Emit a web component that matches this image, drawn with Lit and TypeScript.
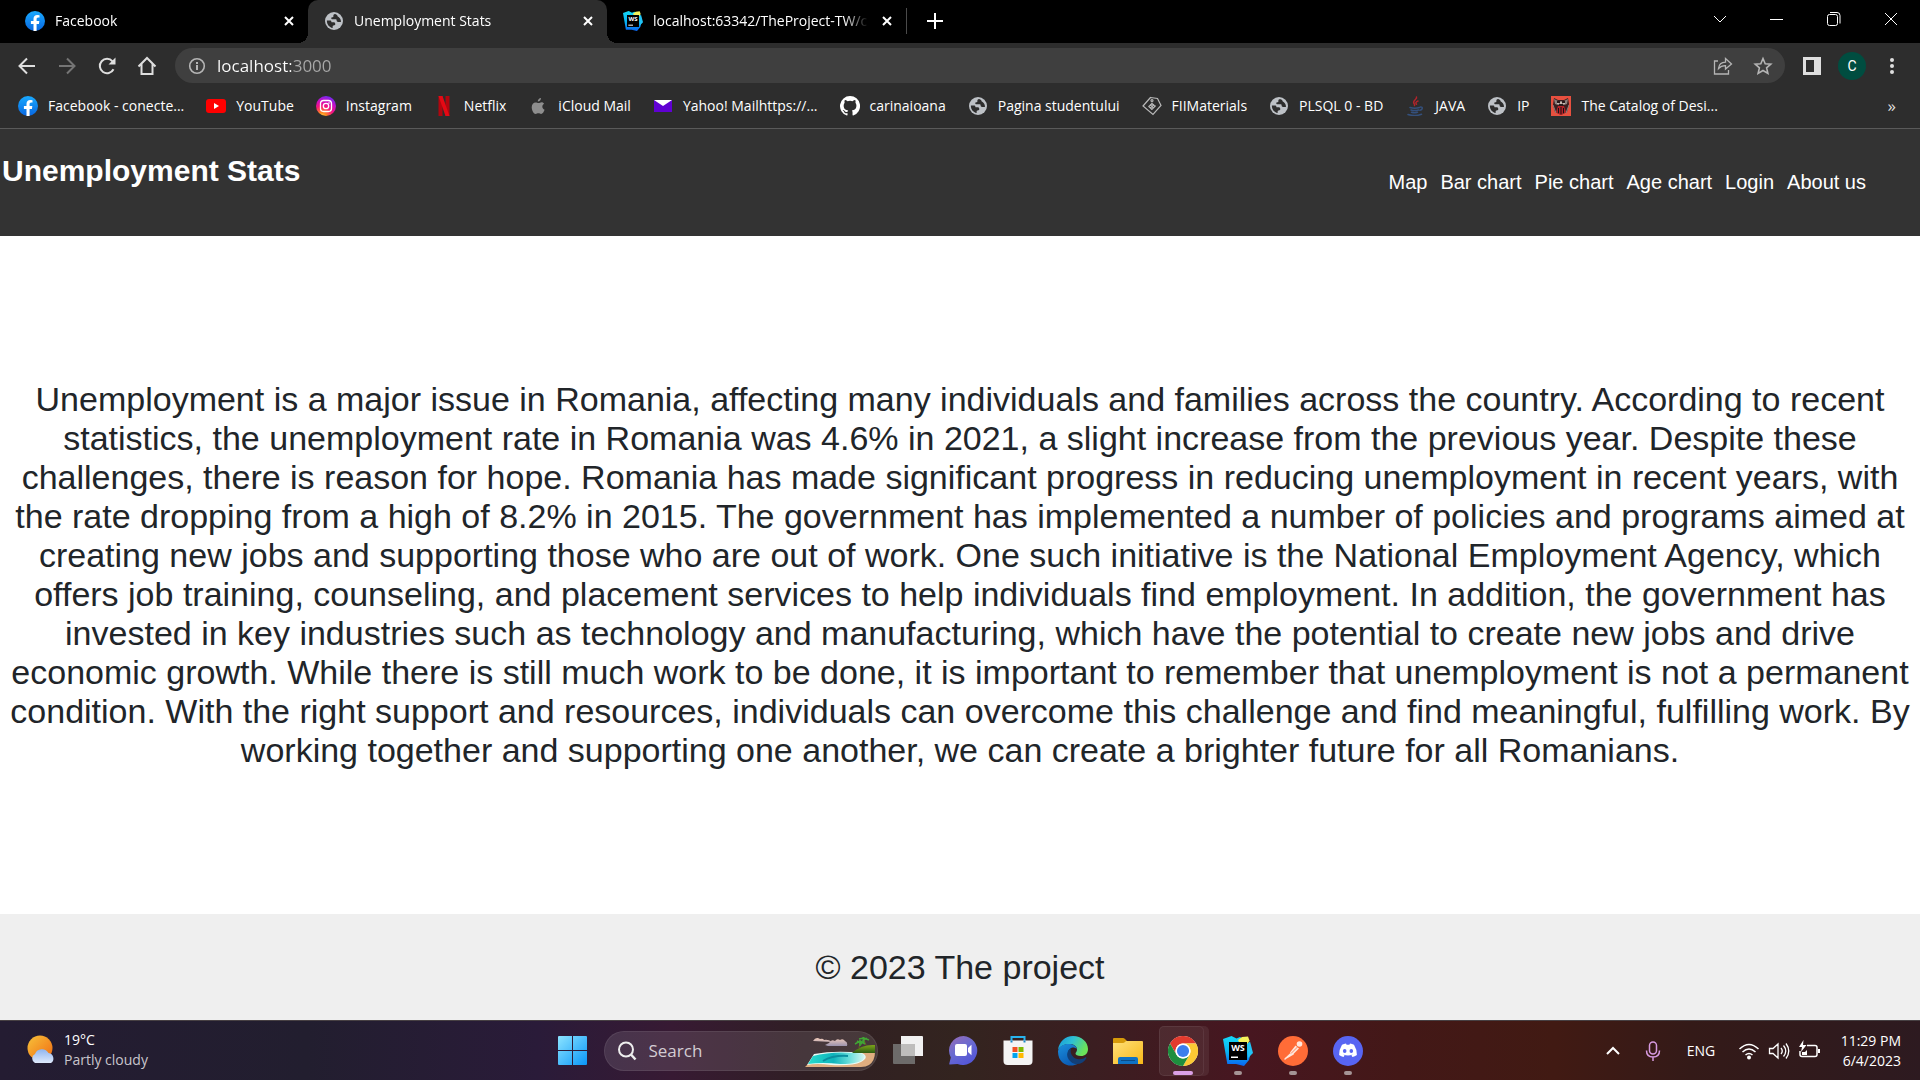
import { LitElement, html, svg, css, nothing, TemplateResult } from "lit";
import { customElement, property } from "lit/decorators.js";

const icon = (name: string, size: number, box: number, body: unknown): TemplateResult => html`
  <svg class="icon ${name}" width=${size} height=${size} viewBox="0 0 ${box} ${box}" aria-hidden="true">${body}</svg>`;

const facebook = () => icon("facebook", 20, 24, svg`
  <defs><linearGradient id="fb" x1="0" y1="0" x2="0" y2="1"><stop offset="0" stop-color="#19aaff"/><stop offset="1" stop-color="#0866e0"/></linearGradient></defs>
  <circle cx="12" cy="12" r="12" fill="url(#fb)"/>
  <path fill="#fff" d="M16.7 15.5l.5-3.5h-3.3V9.8c0-1 .5-1.9 2-1.9h1.5V5a18 18 0 0 0-2.7-.3c-2.700 0-4.500 1.700-4.500 4.700V12H7.100v3.500h3.100v8.400a12 12 0 0 0 3.700 0v-8.400z"/>`);

const globe = () => icon("globe", 18, 24, svg`
  <circle cx="12" cy="12" r="12" fill="#bdc1c6"/>
  <path fill="#2d2d2d" d="M13.500 2.600c-2 .4-2.500 1.600-2.300 2.600.2 1-.5 1.600-1.800 1.700-1 .1-1.200.9-1 1.700.3 1 1.100 1.200 2.600 1.200h3.200c.8 0 1.300.6 1.300 1.500 0 1.200.7 1.900 1.900 1.900h3.900c.2-3.600-2-6.400-4.600-7.700 0-1.300-.9-2.300-3.200-2.900z"/>
  <path fill="#2d2d2d" d="M2.500 11.300c-.2 5 3 9 7.700 10.100v-2c0-1 .5-1.500 1.500-1.500 1.300 0 2-.6 2-1.900 0-1.500-.8-2.300-2.300-2.300h-1.700c-.9 0-1.300-.4-1.300-1.200s-.5-1.200-1.300-1.200z"/>`);

const webstorm = (size: number) => icon("webstorm", size, 30, svg`
  <defs><linearGradient id="ws" x1="0" y1="0" x2="0" y2="1"><stop offset="0" stop-color="#15d8f7"/><stop offset=".55" stop-color="#08b2f2"/><stop offset="1" stop-color="#0a64f2"/></linearGradient></defs>
  <path fill="url(#ws)" d="M4.300 28L0 3l8.500-3 5 2.500L17 1l8 5 3 10-2 8-5 6-8-2z"/>
  <path fill="#f4f25b" d="M15 4L19 1 25 .5l1.500 4L24 9l-7-1z"/>
  <path fill="#21c4f5" d="M24 8l3-2.500L30 17l-5 5z"/>
  <path fill="#000" d="M6 6h18v18H6z"/>
  <text x="15" y="15" text-anchor="middle" class="ws-label">WS</text>
  <path fill="#fff" d="M8 20.500h7V22H8z"/>`);

const bookmarkIcons: Record<string, () => TemplateResult> = {
  facebook,
  globe,
  youtube: () => icon("youtube", 20, 20, svg`<rect y="3" width="20" height="14" rx="3" fill="#f00"/><path fill="#fff" d="M8 7v6l5-3z"/>`),
  instagram: () => icon("instagram", 20, 20, svg`
    <defs><radialGradient id="ig" cx=".3" cy="1.050" r="1.100"><stop offset="0" stop-color="#fd5"/><stop offset=".2" stop-color="#ff8a1f"/><stop offset=".5" stop-color="#f5137f"/><stop offset=".75" stop-color="#c80fc4"/><stop offset="1" stop-color="#6a2df5"/></radialGradient></defs>
    <circle cx="10" cy="10" r="10" fill="url(#ig)"/>
    <rect x="4.500" y="4.500" width="11" height="11" rx="3.200" fill="none" stroke="#fff" stroke-width="1.300"/>
    <circle cx="10" cy="10" r="2.700" fill="none" stroke="#fff" stroke-width="1.300"/><circle cx="13" cy="7" r=".8" fill="#fff"/>`),
  netflix: () => icon("netflix", 20, 20, svg`<path fill="#b1060f" d="M4.500 0h4v20h-4zM11.500 0h4v20h-4z"/><path fill="#e50914" d="M4.500 0h4l7 20h-4z"/>`),
  apple: () => icon("apple", 20, 20, svg`<path fill="#8e8e8e" d="M13 2c.1 1.800-1.300 3.500-3.200 3.500C9.600 3.800 11.200 2.100 13 2zM16 7.800c-2.500 1.600-2 4.900.6 6-.8 2.200-2 4.200-3.500 4.200-1.100 0-1.400-.7-2.700-.7s-1.700.7-2.700.7c-2 0-4-4-4-6.800 0-3 1.900-4.800 3.900-4.800 1.200 0 2 .7 3 .7.900 0 1.700-.8 3.100-.8.900 0 1.800.5 2.300 1.500z"/>`),
  yahoo: () => icon("yahoo", 20, 20, svg`<path fill="#6001d2" d="M1 4h18v12H1z"/><path fill="#fff" d="M1 4h18l-9 6z"/>`),
  github: () => icon("github", 20, 16, svg`<path fill="#fff" d="M8 0a8 8 0 0 0-2.530 15.590c.4.070.55-.17.55-.38v-1.490c-2.010.37-2.530-.49-2.690-.94-.09-.23-.48-.94-.82-1.130-.28-.15-.68-.52-.01-.53.630-.01 1.080.58 1.230.82.720 1.210 1.870.87 2.330.66.070-.52.280-.87.510-1.070-1.780-.2-3.640-.89-3.640-3.950 0-.87.310-1.590.82-2.150-.08-.2-.36-1.020.08-2.120 0 0 .67-.21 2.200.82a7.500 7.500 0 0 1 4 0c1.530-1.040 2.200-.82 2.200-.82.440 1.100.16 1.920.08 2.120.51.560.82 1.270.82 2.150 0 3.070-1.870 3.750-3.650 3.950.29.250.54.730.54 1.480v2.200c0 .21.150.46.550.38A8 8 0 0 0 8 0z"/>`),
  tag: () => icon("tag", 20, 20, svg`<g fill="none" stroke="#b9b9b9" stroke-width="1.200"><path d="M8.500 1.500l7 1 3.500 7-8 9-10-8.500z"/><circle cx="10" cy="4.500" r="1"/><path d="M6.500 10l3.500 3.500M8 8.500l3.500 3.500M9.500 7l3.500 3.500M6.500 11l4-4M8 12.300l4-4M9.700 13.700l4-4"/></g>`),
  java: () => icon("java", 20, 20, svg`
    <g fill="none" stroke-linecap="round"><path stroke="#b0242b" stroke-width="1.500" d="M11.500 1c1 2.500-4.500 3.500-2.500 6.500.4.700.8 1.200.5 2M13 5c-2.500 1-2.500 2-1.500 3.300"/>
    <path stroke="#34507c" stroke-width="1.500" d="M5 11.500c3 .9 6.500.9 9.500 0M6 14c2.500.8 5 .8 7.500 0M6.500 16.300c2 .7 4 .7 6 0M15.500 11c2.500-.3 2.300 2.700-.5 3.300M3 18.500c4 1.200 10 1.200 13.500-.2"/></g>`),
  catalog: () => icon("catalog", 20, 20, svg`<path fill="#e8503f" d="M0 0h20v20H0z"/><path fill="#3a1e20" d="M3 2l4 2h6l4-2 1 6-2 8-6 3-6-3-2-7z"/><path fill="#8b807c" d="M3 3l4 2h6l4-2-1 5-3 1H7L4 8z"/><path fill="#2a1a1c" d="M6 5h3v2H6zM11 5h3v2h-3zM8 8h4v2H8z"/><path fill="#c7b9b2" d="M6 7h2v1H6zM12 7h2v1h-2zM9 6h2v2H9z"/><path fill="#b52228" d="M7 10h6l2 6-5 3-5-3z"/><path stroke="#161014" stroke-width="1" d="M10 11v7M7.500 12v5M12.500 12v5"/><path stroke="#8f7f7a" stroke-width="1" d="M2 9l3 8M18 9l-3 8"/>`),
};

const BOOKMARKS: [string, string][] = [
  ["facebook", "Facebook - conecte..."],
  ["youtube", "YouTube"],
  ["instagram", "Instagram"],
  ["netflix", "Netflix"],
  ["apple", "iCloud Mail"],
  ["yahoo", "Yahoo! Mailhttps://..."],
  ["github", "carinaioana"],
  ["globe", "Pagina studentului"],
  ["tag", "FIIMaterials"],
  ["globe", "PLSQL 0 - BD"],
  ["java", "JAVA"],
  ["globe", "IP"],
  ["catalog", "The Catalog of Desi..."],
];

const line = (name: string, size: number, d: string, width = 2) =>
  icon(name, size, size, svg`<path fill="none" stroke="currentColor" stroke-width=${width} d=${d}/>`);

@customElement("browser-tab")
export class BrowserTab extends LitElement {
  @property() label = "";
  @property({ type: Boolean, reflect: true }) active = false;
  @property({ attribute: false }) favicon: TemplateResult | typeof nothing = nothing;

  static styles = css`
    :host { position: relative; display: flex; align-items: center; gap: 10px; width: 299px; height: 43px; padding: 0 10px 2px 16px; box-sizing: border-box; color: #fff; }
    :host([active]) { background: #2d2d2d; border-radius: 10px 10px 0 0; }
    :host([active])::before, :host([active])::after { content: ""; position: absolute; bottom: 0; width: 10px; height: 10px; }
    :host([active])::before { left: -10px; background: radial-gradient(circle at 0 0, transparent 10px, #2d2d2d 10px); }
    :host([active])::after { right: -10px; background: radial-gradient(circle at 100% 0, transparent 10px, #2d2d2d 10px); }
    .favicon { display: grid; place-items: center; width: 20px; }
    .icon { display: block; flex: none; }
    .ws-label { font: 700 9px "Open Sans", sans-serif; fill: #fff; }
    .label { flex: 1; min-width: 0; white-space: nowrap; mask-image: linear-gradient(90deg, #000 calc(100% - 24px), transparent); }
    button { display: grid; place-items: center; width: 18px; height: 18px; padding: 0; border: 0; background: none; color: inherit; }
  `;

  render() {
    return html`<span class="favicon">${this.favicon}</span><span class="label">${this.label}</span>
      <button aria-label="Close tab">${line("close", 12, "M2 2l8 8M10 2l-8 8")}</button>`;
  }
}

@customElement("browser-chrome")
export class BrowserChrome extends LitElement {
  static styles = css`
    :host { display: block; background: #2d2d2d; border-bottom: 1px solid #5a5a5a; color: #fff; font: 14px/20px "Open Sans", sans-serif; }
    button { display: grid; place-items: center; padding: 0; border: 0; background: none; color: #dedede; font: inherit; }
    .icon { display: block; flex: none; }
    .strip { display: flex; align-items: center; height: 43px; padding-left: 9px; background: #000; }
    .new-tab { width: 56px; height: 26px; margin-bottom: 2px; border-left: 1px solid #4a4a4a; color: #fff; }
    .window { display: flex; margin-left: auto; padding-right: 1px; }
    .window button { width: 57px; height: 38px; margin-bottom: 5px; color: #fff; }
    .toolbar { display: flex; align-items: center; height: 45px; padding: 0 8px 0 7px; }
    .toolbar button { width: 40px; height: 36px; }
    .toolbar .faded { color: #757575; }
    .omnibox { display: flex; align-items: center; flex: 1; height: 35px; margin: 0 7px 0 8px; padding: 0 2px 0 13px; border-radius: 18px; background: #3f3f3f; color: #b5b5b5; gap: 11px; }
    .omnibox input { flex: 1; min-width: 0; height: 28px; padding: 0; border: 0; outline: 0; font: 17px/24px "Open Sans", sans-serif; color: transparent; background: linear-gradient(90deg, #fff 74px, #a8a8a8 74px) text; }
    .actions { display: flex; }
    .omnibox button { color: #b5b5b5; }
    .toolbar .avatar { width: 28px; height: 28px; margin: 0 6px; border-radius: 50%; background: #004d40; color: #fff; font-family: Roboto, sans-serif; }
    .bookmarks { display: flex; align-items: center; height: 36px; padding: 0 24px 4px 18px; gap: 22px; white-space: nowrap; }
    .bookmarks a { display: flex; align-items: center; gap: 10px; color: #fff; text-decoration: none; }
    .bookmarks .mark { display: grid; place-items: center; width: 20px; }
    .bookmarks .more { margin-left: auto; font-size: 17px; }
  `;

  render() {
    return html`
      <div class="strip">
        <browser-tab label="Facebook" .favicon=${facebook()}></browser-tab>
        <browser-tab label="Unemployment Stats" active .favicon=${globe()}></browser-tab>
        <browser-tab label="localhost:63342/TheProject-TW/c" .favicon=${webstorm(20)}></browser-tab>
        <button class="new-tab" aria-label="New tab">${line("plus", 16, "M8 0v16M0 8h16")}</button>
        <div class="window">
          <button aria-label="Search tabs">${line("down", 14, "M1 4l6 6 6-6", 1)}</button>
          <button aria-label="Minimize">${line("minimize", 14, "M0 7.5h13", 1)}</button>
          <button aria-label="Restore">${line("restore", 14, "M2.500 2.500h6q2 0 2 2v7q0 2-2 2h-6q-2 0-2-2v-7q0-2 2-2zM3 .5h7q3 0 3 3v8", 1)}</button>
          <button aria-label="Close">${line("close", 14, "M1 1l12 12M13 1L1 13", 1)}</button>
        </div>
      </div>
      <div class="toolbar">
        <button aria-label="Back">${line("back", 18, "M17 9H2M9 1.500L1.500 9 9 16.500")}</button>
        <button class="faded" aria-label="Forward">${line("forward", 18, "M1 9h15M9 1.500L16.500 9 9 16.500")}</button>
        <button aria-label="Reload">${icon("reload", 20, 20, svg`<path fill="none" stroke="currentColor" stroke-width="2" d="M16.500 13.200A7.200 7.200 0 1 1 15.500 5.300"/><path fill="currentColor" d="M18.500 1.500v7h-7z"/>`)}</button>
        <button aria-label="Home">${line("home", 20, "M1.500 10.500L10 2l8.500 8.500M4.500 8v10h11V8")}</button>
        <div class="omnibox">
          ${icon("info", 18, 18, svg`<circle cx="9" cy="9" r="7.300" fill="none" stroke="currentColor" stroke-width="1.600"/><path fill="currentColor" d="M8 8h2v5H8zM8 5h2v2H8z"/>`)}
          <input aria-label="Address" .value=${"localhost:3000"}>
          <div class="actions">
            <button aria-label="Share">${line("share", 20, "M5 5H1.500v13h14v-4M5.500 12.500C6 8 9 6.300 12.500 6.200V2.500L18.500 8l-6 5V9.600C9.500 9.500 7.500 10.300 5.500 12.500z", 1.3)}</button>
            <button aria-label="Bookmark">${line("star", 20, "M10 2.500l2.200 5.200 5.600.5-4.200 3.700 1.300 5.500L10 14.500l-4.900 2.900 1.300-5.500L2.200 8.200l5.600-.5z", 1.6)}</button>
          </div>
        </div>
        <button aria-label="Side panel">${icon("panel", 18, 18, svg`<path fill="currentColor" fill-rule="evenodd" d="M0 0h18v18H0zM3 3v12h8V3z"/>`)}</button>
        <button class="avatar" aria-label="Profile">C</button>
        <button aria-label="Menu">${icon("dots", 18, 18, svg`<g fill="currentColor"><circle cx="9" cy="3" r="2"/><circle cx="9" cy="9" r="2"/><circle cx="9" cy="15" r="2"/></g>`)}</button>
      </div>
      <nav class="bookmarks" aria-label="Bookmarks">
        ${BOOKMARKS.map(([name, label]) => html`<a href="#"><span class="mark">${bookmarkIcons[name]()}</span><span>${label}</span></a>`)}
        <button class="more" aria-label="More bookmarks">»</button>
      </nav>`;
  }
}

const LINKS = ["Map", "Bar chart", "Pie chart", "Age chart", "Login", "About us"];

@customElement("stats-page")
export class StatsPage extends LitElement {
  static styles = css`
    :host { display: flex; flex-direction: column; flex: 1; background: #fff; color: #212529; font: 34px/39px "Liberation Sans", Arial, sans-serif; }
    header { display: flex; justify-content: space-between; min-height: 57px; padding: 25px 54px 25px 2px; background: #333; color: #fff; }
    h1 { margin: 0; font-size: 30px; line-height: 34px; }
    nav { display: flex; align-items: center; gap: 13px; font-size: 20px; line-height: 23px; }
    a { color: #fff; text-decoration: none; }
    main { display: flex; flex: 1; align-items: center; justify-content: center; padding: 0 10px; text-align: center; }
    p { margin: 0; }
    footer { padding: 34px 0 33px; background: #efefef; text-align: center; }
  `;

  render() {
    return html`
      <header>
        <h1>Unemployment Stats</h1>
        <nav>${LINKS.map((label) => html`<a href="#">${label}</a>`)}</nav>
      </header>
      <main>
        <p>Unemployment is a major issue in Romania, affecting many individuals and families across the country. According to recent statistics, the unemployment rate in Romania was 4.6% in 2021, a slight increase from the previous year. Despite these challenges, there is reason for hope. Romania has made significant progress in reducing unemployment in recent years, with the rate dropping from a high of 8.2% in 2015. The government has implemented a number of policies and programs aimed at creating new jobs and supporting those who are out of work. One such initiative is the National Employment Agency, which offers job training, counseling, and placement services to help individuals find employment. In addition, the government has invested in key industries such as technology and manufacturing, which have the potential to create new jobs and drive economic growth. While there is still much work to be done, it is important to remember that unemployment is not a permanent condition. With the right support and resources, individuals can overcome this challenge and find meaningful, fulfilling work. By working together and supporting one another, we can create a brighter future for all Romanians.</p>
      </main>
      <footer>© 2023 The project</footer>`;
  }
}

const start = icon("start", 29, 29, svg`
  <defs><linearGradient id="win" x1="0" y1="0" x2="1" y2="1"><stop offset="0" stop-color="#8ce4ff"/><stop offset="1" stop-color="#0a96f8"/></linearGradient></defs>
  <path fill="url(#win)" d="M0 1q0-1 1-1h13v14H0zM15 0h13q1 0 1 1v13H15zM0 15h14v14H1q-1 0-1-1zM15 15h14v13q0 1-1 1H15z"/>`);

const island = html`<svg class="island" width="70" height="30" viewBox="0 0 70 30" aria-hidden="true">
  <defs>
    <linearGradient id="sea" x1="0" y1="0" x2="1" y2="0"><stop offset="0" stop-color="#27dccd"/><stop offset=".45" stop-color="#0fb4bc"/><stop offset=".75" stop-color="#6fe0dd"/><stop offset="1" stop-color="#d9f7f0"/></linearGradient>
    <linearGradient id="cloud" x1="0" y1="0" x2="0" y2="1"><stop offset="0" stop-color="#f3cdbb"/><stop offset="1" stop-color="#9b93ae"/></linearGradient>
    <linearGradient id="hill" x1="0" y1="0" x2="0" y2="1"><stop offset="0" stop-color="#7ea61a"/><stop offset="1" stop-color="#2d5c12"/></linearGradient>
  </defs>
  <path fill="url(#cloud)" d="M8 4q3-5 7-2 3-1 4 1 4-1 8 2zM20 8l4-2q2-4 6-2 2-3 5-1 3-2 5 1 3 1 2 5H23z"/>
  <path fill="#e0ae80" d="M0 30l5-5q30-10 50-9l15-1q0 9-6 13-3 2-8 2z"/>
  <path fill="#e9fbf6" d="M2 28L9 17q22-4 48-1 8 4-1 9-8 4-30 3-14-2-24 0z"/>
  <path fill="url(#sea)" d="M3 27L8 19q18-5 42-3 12 0 9 5-3 6-24 6-18-2-32 0z"/>
  <path fill="none" stroke="#0a8fa0" stroke-width="2" d="M18 24q10-6 25-5"/>
  <path fill="url(#hill)" d="M47 16Q57 7 70 8v8z"/>
  <path fill="none" stroke="#715c26" stroke-width="1" d="M54 11l1-6M61 8l-2-5"/>
  <path fill="none" stroke="#40a534" stroke-width="1.500" d="M50 7l5-3 5 3M52 4l5 3M55 3v6M54 2l5-1 5 2M58 0l1 6M56 5l6-4"/>
</svg>`;

const apps: [string, TemplateResult, string][] = [
  ["Task View", icon("taskview", 30, 30, svg`<path fill="#6d6b6a" d="M0 8h22v20H1q-1 0-1-1z"/><path fill="#f1f1f1" d="M8 0h21q1 0 1 1v19H8z"/><path fill="#bebdbc" d="M8 8h14v12H8z"/>`), ""],
  ["Chat", icon("chat", 29, 29, svg`<defs><linearGradient id="chat" x1="0" y1="0" x2=".6" y2="1"><stop offset="0" stop-color="#9a6bb5"/><stop offset=".5" stop-color="#6b6bd0"/><stop offset="1" stop-color="#5457d8"/></linearGradient></defs><path fill="url(#chat)" d="M14.500 0a14.500 14.500 0 1 1-6 28L1 28.500q-1 0-.7-1l1.500-6A14.500 14.500 0 0 1 14.500 0z"/><rect x="6" y="8" width="12" height="12" rx="2" fill="#fff"/><path fill="#fff" d="M19 12l3.500-3.300v10.600L19 16z"/>`), ""],
  ["Store", icon("store", 30, 30, svg`<path fill="none" stroke="#28b4ee" stroke-width="2" d="M8.500 6V1h13v5"/><path fill="#f4f4f4" d="M.5 4.500h29V25q0 4-4 4h-21q-4 0-4-4z"/><path fill="none" stroke="#1c86c4" stroke-width="2" d="M8.500 4.500v2M21.500 4.500v2"/><path fill="#f25022" d="M9.500 11h5v5h-5z"/><path fill="#7fba00" d="M15.500 11h5v5h-5z"/><path fill="#00a4ef" d="M9.500 17h5v5h-5z"/><path fill="#ffb900" d="M15.500 17h5v5h-5z"/>`), ""],
  ["Edge", icon("edge", 30, 30, svg`
    <defs><linearGradient id="e1" x1="0" y1="0" x2="1" y2=".4"><stop offset="0" stop-color="#1597dd"/><stop offset=".5" stop-color="#2fc0d2"/><stop offset="1" stop-color="#6be35a"/></linearGradient><linearGradient id="e2" x1="0" y1="0" x2=".5" y2="1"><stop offset="0" stop-color="#1b8fdc"/><stop offset="1" stop-color="#0b5cb5"/></linearGradient></defs>
    <path fill="url(#e1)" d="M0 14C1 6 7 0 15 0c8.500 0 15 6 15 13 0 4.500-3 7-7 7-3.500 0-5.500-1.200-5.500-2.500 0-1 1.500-1.500 1.500-4C19 10 15.500 8 11 8 6 8 2 10.500 0 14z"/>
    <path fill="url(#e2)" d="M0 15C1 10.500 5.500 8 10.500 8c4.500 0 8 2 8.300 5-1-1-2.300-1.500-4-1.500-5 1-7 8-2 13.500 1.700 1.800 4 2.800 7 2.800-7.500 4.500-20 .7-19.800-12.800z"/>
    <path fill="#123f77" d="M13.500 11.700c-2.500 4 .5 10.300 6 11.300 3.500.7 6-.4 7.500-1.500 1-.6 1.800.2 1.200 1-2.500 4-6.500 6-10.200 5.500-6.500-1-10-7-8.500-11.500.7-2.500 2.200-4.200 4-4.800z"/>`), ""],
  ["File Explorer", icon("explorer", 30, 30, svg`<defs><linearGradient id="fold" x1="0" y1="0" x2="1" y2="1"><stop offset="0" stop-color="#ffe07a"/><stop offset="1" stop-color="#f8b818"/></linearGradient></defs><path fill="#d79a0a" d="M0 3q0-1 1-1h9q1 0 2 1l2 2h10v5H0z"/><path fill="url(#fold)" d="M0 7h10q1 0 2-1l1-1h16q1 0 1 1v22H0z"/><path fill="#0f72c4" d="M5 28v-5q0-2 2-2h16q2 0 2 2v5z"/><path stroke="#0a4c88" stroke-width="1" d="M8 24.500h14"/>`), ""],
  ["Chrome", icon("chrome", 30, 48, svg`
    <circle cx="24" cy="24" r="24" fill="#fff"/>
    <path fill="#e33b2e" d="M3.200 12A24 24 0 0 1 44.800 12H24a12 12 0 0 0-10.400 18z"/>
    <path fill="#fcc934" d="M44.800 12A24 24 0 0 1 24 48l10.400-18A12 12 0 0 0 24 12z"/>
    <path fill="#1e8e3e" d="M24 48A24 24 0 0 1 3.200 12l10.400 18a12 12 0 0 0 20.800 0z"/>
    <circle cx="24" cy="24" r="12" fill="#fff"/><circle cx="24" cy="24" r="9.700" fill="#3b7ded"/>`), "current"],
  ["WebStorm", webstorm(30), "running"],
  ["Postman", icon("postman", 30, 30, svg`<circle cx="15" cy="15" r="15" fill="#ff6c37"/><circle cx="21.500" cy="8" r="2.800" fill="#ffe7dc"/><path fill="#ffe7dc" d="M17.500 9.500l3.500 3-6.500 6.500-2.500-2.500z"/><path stroke="#ffe7dc" stroke-width="1.500" fill="none" stroke-linecap="round" d="M7 23l7-6.500M8 22l7-4"/><path stroke="#ff6c37" stroke-width=".8" d="M13 17.500l6.500-6.500"/>`), "running"],
  ["Discord", icon("discord", 30, 30, svg`<circle cx="15" cy="15" r="15" fill="#5865f2"/><path fill="#fff" d="M9 8.700q2-1 4-1.200l.6 1.200h2.800l.6-1.200q2 .2 4 1.200 3 4.800 2.900 10.300-2.200 1.600-4.400 2.100l-1.100-1.700 1.300-.8q-4.700 1.900-9.400 0l1.300.8-1.100 1.700Q8.300 20.600 6.100 19 6 13.500 9 8.700z"/><ellipse cx="11.700" cy="15" rx="1.800" ry="2" fill="#5865f2"/><ellipse cx="18.300" cy="15" rx="1.800" ry="2" fill="#5865f2"/>`), "running"],
];

@customElement("task-bar")
export class TaskBar extends LitElement {
  static styles = css`
    :host { display: grid; grid-template-columns: 1fr auto 1fr; align-items: center; height: 59px; border-top: 1px solid #474043; color: #fff; font: 14px/20px "Open Sans", sans-serif;
      background: linear-gradient(90deg, #241c32 0%, #221e2f 16%, #2a1b39 28%, #371a33 35%, #301f24 42%, #33241f 50%, #3b1e21 57%, #471620 65%, #431817 73%, #411a13 81%, #341a18 88%, #2d1a20 100%); }
    button { display: grid; place-items: center; padding: 0; border: 0; background: none; color: inherit; font: inherit; }
    .icon { display: block; flex: none; }
    .ws-label { font: 700 9px "Open Sans", sans-serif; fill: #fff; }
    .weather { display: flex; gap: 8px; padding: 0 0 2px 27px; justify-self: start; text-align: left; align-items: center; }
    .weather span { display: block; }
    .weather .sky { color: #c9c5cc; }
    .center, .tray { display: flex; align-items: center; }
    .app { position: relative; width: 55px; height: 50px; }
    .app.current::before { content: ""; position: absolute; inset: 0 7px 0 3px; border: 1px solid #ffffff12; border-radius: 5px; background: #ffffff12; box-shadow: 5px 0 0 #ffffff12; }
    .app .icon { position: relative; }
    .app.current::after, .app.running::after { content: ""; position: absolute; bottom: 1px; left: 50%; width: 8px; height: 4px; margin-left: -4px; border-radius: 2px; background: #a59495; }
    .app.current::after { width: 20px; margin-left: -10px; background: #dba0e6; }
    .search { display: flex; align-items: center; gap: 12px; width: 274px; height: 40px; box-sizing: border-box; margin: 0 3px 0 4px; padding-left: 12px; border: 1px solid #ffffff14; border-radius: 20px; background: #ffffff1c; }
    .search input { flex: 1; min-width: 0; padding: 0; border: 0; outline: 0; background: none; color: #fff; font: 17px/24px "Open Sans", sans-serif; }
    .search input::placeholder { color: #d3ccd3; opacity: 1; }
    .island { display: block; flex: none; margin-right: 2px; margin-top: 2px; }
    .tray { justify-self: end; padding-right: 19px; }
    .tray > button { width: 40px; height: 40px; }
    .tray .mic { color: #d79ae0; }
    .tray .lang { width: 56px; }
    .tray .status { display: flex; align-items: center; gap: 8px; width: 100px; justify-content: center; }
    .tray .clock { display: block; width: auto; min-width: 64px; margin-left: 8px; padding-bottom: 2px; text-align: right; }
  `;

  render() {
    return html`
      <button class="weather">
        ${icon("sun", 29, 29, svg`
          <defs><linearGradient id="sun" x1="0" y1="0" x2="1" y2="1"><stop offset="0" stop-color="#f7c23a"/><stop offset="1" stop-color="#f06a12"/></linearGradient><linearGradient id="cl" x1="0" y1="0" x2="0" y2="1"><stop offset="0" stop-color="#8fb5f0"/><stop offset="1" stop-color="#dfeafc"/></linearGradient></defs>
          <circle cx="13" cy="13" r="12.500" fill="url(#sun)"/><path fill="url(#cl)" d="M8 28a5 5 0 0 1 0-9 7.500 7.500 0 0 1 13.500-1A5.500 5.500 0 0 1 24 28z"/>`)}
        <span><span>19°C</span><span class="sky">Partly cloudy</span></span>
      </button>
      <div class="center">
        <button class="app" aria-label="Start">${start}</button>
        <label class="search">
          ${icon("find", 20, 20, svg`<g fill="none" stroke="#eee" stroke-width="2"><circle cx="9" cy="8.500" r="7"/><path stroke-width="2.500" d="M14 13.500l4.500 5"/></g>`)}
          <input type="search" placeholder="Search" aria-label="Search">
          ${island}
        </label>
        ${apps.map(([label, glyph, state]) => html`<button class="app ${state}" aria-label=${label}>${glyph}</button>`)}
      </div>
      <div class="tray">
        <button aria-label="Hidden icons">${line("up", 14, "M1 10l6-6 6 6")}</button>
        <button class="mic" aria-label="Microphone">${icon("mic", 20, 20, svg`<g fill="none" stroke="currentColor" stroke-width="1.500"><rect x="6.500" y="1" width="7" height="12" rx="3.500"/><path d="M3.500 9.500q0 6.500 6.500 6.500t6.500-6.500M10 16v4"/></g>`)}</button>
        <button class="lang">ENG</button>
        <button class="status" aria-label="Network, volume, battery">
          ${icon("wifi", 22, 22, svg`<g fill="none" stroke="#fff" stroke-width="1.500"><path d="M1.500 9q9.500-9 19 0M4.500 12q6.500-6 13 0M7.500 15q3.500-3 7 0"/></g><circle cx="11" cy="17.500" r="2" fill="#fff"/>`)}
          ${icon("volume", 22, 22, svg`<g fill="none" stroke="#fff" stroke-width="1.300"><path d="M1.500 8.500v5H5l5 4.500V4L5 8.500zM13 8q2.500 3 0 6M15.500 5.500q4.500 5.500 0 11M18 3.500q5.500 7.500 0 15"/></g>`)}
          ${icon("battery", 22, 22, svg`<path fill="none" stroke="#fff" stroke-width="1.500" d="M9 5.500h8q2 0 2 2v7q0 2-2 2H4q-2 0-2-2V11"/><path fill="#fff" d="M20 9h2v4h-2zM4 12l3 0 2-2v5H4zM5.500 0L1 7h3l-1 5 5.500-7H5z"/>`)}
        </button>
        <button class="clock">11:29 PM<br>6/4/2023</button>
      </div>`;
  }
}

@customElement("app-root")
export class AppRoot extends LitElement {
  static styles = css`
    :host { display: flex; flex-direction: column; min-height: 100vh; }
  `;

  render() {
    return html`<browser-chrome></browser-chrome><stats-page></stats-page><task-bar></task-bar>`;
  }
}
